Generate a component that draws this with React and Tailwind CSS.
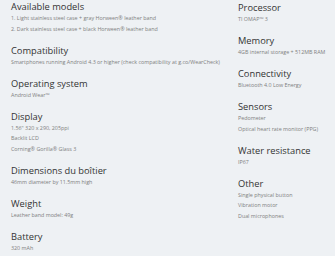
const left = [
  {
    title: 'Available models',
    lines: [
      '1. Light stainless steel case + gray Horween® leather band',
      '2. Dark stainless steel case + black Horween® leather band',
    ],
  },
  {
    title: 'Compatibility',
    lines: ['Smartphones running Android 4.3 or higher (check compatibility at g.co/WearCheck)'],
  },
  { title: 'Operating system', lines: ['Android Wear™'] },
  {
    title: 'Display',
    lines: ['1.56" 320 x 290, 205ppi', 'Backlit LCD', 'Corning® Gorilla® Glass 3'],
  },
  { title: 'Dimensions du boîtier', lines: ['46mm diameter by 11.5mm high'] },
  { title: 'Weight', lines: ['Leather band model: 49g'] },
  { title: 'Battery', lines: ['320 mAh'] },
];

const right = [
  { title: 'Processor', lines: ['TI OMAP™ 3'] },
  { title: 'Memory', lines: ['4GB internal storage + 512MB RAM'] },
  { title: 'Connectivity', lines: ['Bluetooth 4.0 Low Energy'] },
  { title: 'Sensors', lines: ['Pedometer', 'Optical heart rate monitor (PPG)'] },
  { title: 'Water resistance', lines: ['IP67'] },
  {
    title: 'Other',
    lines: ['Single physical button', 'Vibration motor', 'Dual microphones'],
  },
];

const Spec = ({ title, lines }) => (
  <div className="mb-[9.5px]">
    <h3 className="text-[9.3px] leading-[13px] text-[#333]">{title}</h3>
    {lines.map((line) => (
      <p key={line} className="text-[5.35px] leading-[10.5px] text-[#808080] whitespace-nowrap">
        {line}
      </p>
    ))}
  </div>
);

const App = () => {
  return (
    <div
      className="min-h-screen bg-[#eef1f4] pl-[11px]"
      style={{ fontFamily: '"Open Sans", sans-serif' }}
    >
      <div className="flex">
        {/* Left column */}
        <div className="w-[227px]">
          {left.map((s) => (
            <Spec key={s.title} {...s} />
          ))}
        </div>

        {/* Right column */}
        <div className="flex-1 pt-[1px]">
          {right.map((s) => (
            <Spec key={s.title} {...s} />
          ))}
        </div>
      </div>
    </div>
  );
};

export default App;
